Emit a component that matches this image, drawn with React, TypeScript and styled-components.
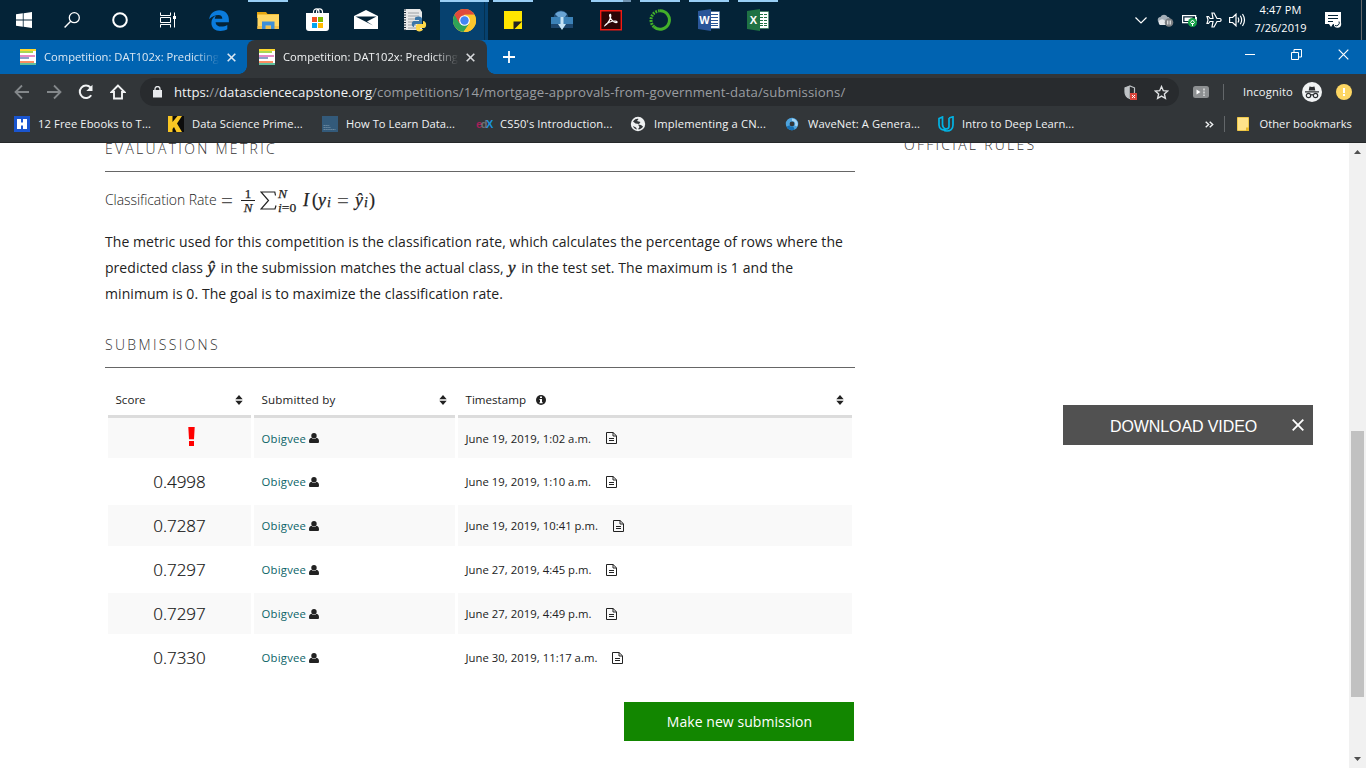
import React, { ReactNode } from "react";
import styled, { createGlobalStyle, css } from "styled-components";

const Global = createGlobalStyle`
  * { box-sizing: border-box; }
  html, body { margin: 0; padding: 0; background: #fff; }
  body { width: 1366px; height: 768px; overflow: hidden; font-family: "Open Sans", "Noto Sans", sans-serif; color: #222; }
  svg { display: block; flex: none; }
`;

const Screen = styled.div`
  position: relative;
  width: 1366px;
  height: 768px;
  display: flex;
  flex-direction: column;
  overflow: hidden;
`;

const Text = styled.span<{ $ls?: number; $color?: string }>`
  white-space: nowrap;
  letter-spacing: ${(p) => p.$ls ?? 0}px;
  ${(p) => p.$color && css`color: ${p.$color};`}
`;

/* ---------- Task bar ---------- */
const TaskBar = styled.div`
  display: flex;
  flex: none;
  height: 40px;
  background: #042337;
`;
const SystemButtons = styled.div`
  display: flex;
  width: 195px;
`;
const SystemButton = styled.div`
  width: 48px;
  display: flex;
  align-items: center;
  justify-content: center;
`;
const AppButton = styled.div<{ $active?: boolean; $open?: boolean; $stacked?: boolean }>`
  width: 49px;
  height: 40px;
  display: flex;
  align-items: center;
  justify-content: center;
  padding-right: 1px;
  background: ${(p) => (p.$active ? "linear-gradient(90deg, #06416f 0 44px, #04304f 44px 45px, #06416f 45px 48px, transparent 48px)" : "transparent")};
  ${(p) => p.$open && css`
    background-image: linear-gradient(90deg, transparent 4px, #99cef5 4px ${p.$stacked ? 36 : 44}px, ${p.$stacked ? "#6f93b0" : "transparent"} ${p.$stacked ? 36 : 44}px 44px, transparent 44px);
    background-size: 100% 2px;
    background-repeat: no-repeat;
  `}
  ${(p) => p.$active && css`box-shadow: inset 0 2px 0 #99cef5;`}
`;
const Tray = styled.div`
  margin-left: auto;
  display: flex;
  align-items: center;
`;
const TrayIcon = styled.div<{ $w: number }>`
  width: ${(p) => p.$w}px;
  display: flex;
  justify-content: center;
`;
const Clock = styled.div`
  width: 63px;
  padding-bottom: 2px;
  font-size: 11px;
  line-height: 18px;
  color: #fff;
  display: flex;
  flex-direction: column;
  align-items: center;
`;

/* ---------- Browser frame ---------- */
const TabStrip = styled.div`
  display: flex;
  flex: none;
  height: 34px;
  background: #0063b1;
`;
const Tab = styled.div<{ $active?: boolean }>`
  position: relative;
  width: ${(p) => (p.$active ? 240 : 247)}px;
  padding-left: ${(p) => (p.$active ? 12 : 20)}px;
  display: flex;
  align-items: center;
  font-size: 11.2px;
  color: ${(p) => (p.$active ? "#f1f3f4" : "#dbe8f3")};
  ${(p) => p.$active && css`
    background: #323639;
    border-radius: 8px 8px 0 0;
    &::before, &::after {
      content: "";
      position: absolute;
      bottom: 0;
      width: 8px;
      height: 8px;
    }
    &::before { left: -8px; background: radial-gradient(circle at 0 0, transparent 7.5px, #323639 8px); }
    &::after { right: -8px; background: radial-gradient(circle at 100% 0, transparent 7.5px, #323639 8px); }
  `}
`;
const TabTitle = styled.div`
  width: 176px;
  margin: 0 7px 0 8px;
  padding-bottom: 2px;
  overflow: hidden;
  mask-image: linear-gradient(90deg, #000 150px, transparent 176px);
`;
const NewTab = styled.div`
  padding: 10px 0 0 15px;
`;
const WindowButtons = styled.div`
  margin-left: auto;
  display: flex;
  gap: 36px;
  padding: 9px 17px 0 0;
`;
const Toolbar = styled.div`
  flex: none;
  height: 36px;
  background: #323639;
  display: flex;
  align-items: center;
  padding-left: 14px;
`;
const NavButtons = styled.div`
  display: flex;
  gap: 16px;
  width: 126px;
`;
const AddressBar = styled.div`
  width: 1039px;
  height: 28px;
  border-radius: 14px;
  background: #282b2e;
  display: flex;
  align-items: center;
  padding: 0 10px 0 13px;
  font-size: 13.2px;
  color: #9a9da1;
`;
const Address = styled.div`
  margin-left: 12px;
  flex: 1;
`;
const AddressIcons = styled.div`
  display: flex;
  gap: 16px;
`;
const Extensions = styled.div`
  display: flex;
  align-items: center;
  font-size: 11.2px;
  color: #f1f3f4;
  padding-left: 14px;
`;
const Incognito = styled.div`
  padding-bottom: 2px;
`;
const Separator = styled.div<{ $l: number; $r: number; $h?: number }>`
  width: 1px;
  height: ${(p) => p.$h ?? 16}px;
  background: #63676a;
  margin: 0 ${(p) => p.$r}px 0 ${(p) => p.$l}px;
`;
const Round = styled.div<{ $size: number; $bg: string; $ml: number }>`
  width: ${(p) => p.$size}px;
  height: ${(p) => p.$size}px;
  margin-left: ${(p) => p.$ml}px;
  border-radius: 50%;
  background: ${(p) => p.$bg};
  display: flex;
  align-items: center;
  justify-content: center;
`;
const BookmarkBar = styled.div`
  flex: none;
  height: 33px;
  padding: 0 14px 4px 14px;
  background: #323639;
  border-bottom: 1px solid #25282a;
  display: flex;
  align-items: center;
  font-size: 11.2px;
  color: #f1f3f4;
`;
const Bookmark = styled.div`
  width: 154px;
  display: flex;
  align-items: center;
  gap: 8px;
`;
const BookmarkTitle = styled.div`
  padding-bottom: 2px;
`;
const OtherBookmarks = styled.div`
  margin-left: auto;
  display: flex;
  align-items: center;
`;
const OtherTitle = styled(BookmarkTitle)`
  margin-left: 10px;
`;

/* ---------- Page ---------- */
const Page = styled.div`
  flex: 1;
  min-height: 0;
  display: flex;
  overflow: hidden;
`;
const Main = styled.main`
  width: 750px;
  margin-left: 105px;
  margin-top: -7px;
`;
const Side = styled.aside`
  margin-left: 49px;
  margin-top: -11px;
  flex: 1;
`;
const Heading = styled.h2`
  margin: 0;
  height: 36px;
  line-height: 26px;
  font-size: 14px;
  font-weight: 300;
  color: #333;
  white-space: nowrap;
`;
const RuledHeading = styled(Heading)`
  border-bottom: 1px solid #666;
`;
const Formula = styled.div`
  display: flex;
  align-items: center;
  height: 34px;
  margin-top: 11px;
  font-size: 14px;
  font-weight: 300;
`;
const FormulaLabel = styled.div`
  padding-bottom: 2px;
  width: 112px;
`;
const MathRow = styled.div`
  display: flex;
  align-items: center;
  font-family: "Liberation Serif", serif;
  font-weight: 400;
  font-size: 18px;
  line-height: 20px;
  color: #222;
  -webkit-text-stroke: 0.25px #222;
`;
const Equals = styled.span<{ $l: number; $r: number }>`
  margin: 2px ${(p) => p.$r}px 0 ${(p) => p.$l}px;
  width: 12px;
  font-size: 21px;
  color: #555;
  -webkit-text-stroke: 0;
`;
const Fraction = styled.span`
  display: flex;
  flex-direction: column;
  align-items: center;
  width: 14px;
  margin: 0 5px 0 1px;
  padding-top: 2px;
  font-size: 13px;
  line-height: 12px;
  & > :first-child { border-bottom: 1px solid #222; width: 14px; text-align: center; }
  & > :last-child { padding-top: 1px; }
`;
const Limits = styled.span`
  display: flex;
  flex-direction: column;
  font-size: 13.5px;
  line-height: 11px;
  width: 25px;
  gap: 3px;
`;
const Var = styled.i``;
const MathPart = styled.span<{ $w: number; $sub?: boolean }>`
  width: ${(p) => p.$w}px;
  white-space: nowrap;
  ${(p) => p.$sub && css`font-size: 14px; padding-top: 6px;`}
`;
const InlineVar = styled.i`
  display: inline-block;
  width: 9px;
  margin: 0 0.5px 0 0.8px;
  font-family: "Liberation Serif", serif;
  font-size: 17px;
  line-height: 20px;
  -webkit-text-stroke: 0.4px #222;
`;
const Paragraph = styled.p`
  margin: 12px 0 25px;
  font-size: 14px;
  line-height: 26px;
`;
const Line = styled.div`
  height: 26px;
  white-space: nowrap;
`;

const Table = styled.div`
  display: grid;
  grid-template-columns: 143px 201px 394px;
  column-gap: 3px;
  row-gap: 3px;
  margin: 16px 3px 0;
`;
const HeadCell = styled.div`
  height: 34px;
  border-bottom: 3px solid #dcdcdc;
  margin-bottom: -3px;
  padding: 0 8px 0 7.5px;
  display: flex;
  align-items: center;
  font-size: 11.6px;
  font-weight: 500;
`;
const HeadEnd = styled.span`
  margin-left: auto;
`;
const InfoMark = styled.span`
  margin-left: 10px;
`;
const Cell = styled.div<{ $odd?: boolean; $first?: boolean; $center?: boolean }>`
  height: ${(p) => (p.$first ? 40 : 41)}px;
  background: ${(p) => (p.$odd ? "#f9f9f9" : "#fff")};
  padding: 0 7.5px;
  display: flex;
  align-items: center;
  justify-content: ${(p) => (p.$center ? "center" : "flex-start")};
  font-size: 11.3px;
`;
const Score = styled.span`
  font-size: 17px;
  font-weight: 300;
  color: #111;
  -webkit-text-stroke: 0.2px #111;
`;
const Failed = styled.span`
  margin: -4px 0 0 23px;
`;
const UserLink = styled.a`
  color: #0b6468;
  margin-right: 3px;
`;
const Stamp = styled.span`
  margin-right: 14.6px;
`;
const SubmitButton = styled.div`
  width: 230px;
  height: 39px;
  margin: 24px 0 0 519px;
  padding-left: 1px;
  background: #128600;
  color: #fff;
  font-size: 14px;
  display: flex;
  align-items: center;
  justify-content: center;
`;
const ScrollBar = styled.div`
  width: 17px;
  background: #f1f1f1;
  display: flex;
  flex-direction: column;
  align-items: center;
  padding: 7px 0 7px;
`;
const Track = styled.div`
  flex: 1;
  width: 13px;
  padding-top: 277px;
`;
const Thumb = styled.div`
  height: 266px;
  background: #c1c1c1;
`;
const DownloadPanel = styled.div`
  position: absolute;
  left: 1063px;
  top: 405px;
  width: 250px;
  height: 40px;
  background: #515151;
  color: #fff;
  font: 16px/40px "Liberation Sans", Arial, sans-serif;
  padding: 3px 9px 0 47px;
  display: flex;
  align-items: center;
  justify-content: space-between;
`;
const PanelClose = styled.span`
  margin-top: -4px;
`;

/* ---------- Icons ---------- */
const Svg = ({ w, h = w, vb, children }: { w: number; h?: number; vb?: string; children: ReactNode }) => (
  <svg width={w} height={h} viewBox={vb ?? `0 0 ${w} ${h}`} fill="none">{children}</svg>
);
const Windows = () => <Svg w={16}><path fill="#fff" d="M0 2.3 6.8 1.3V7.6H0zM7.6 1.2 16 0v7.6H7.6zM0 8.4h6.8v6.3L0 13.7zM7.6 8.4H16V16l-8.4-1.2z" /></Svg>;
const Search = () => <Svg w={16}><circle cx="10.3" cy="5.7" r="5" stroke="#fff" strokeWidth="1.3" /><path d="M6.7 9.3.6 15.5" stroke="#fff" strokeWidth="1.4" /></Svg>;
const Cortana = () => <Svg w={16}><circle cx="8" cy="8" r="6.8" stroke="#fff" strokeWidth="2" /></Svg>;
const TaskView = () => <Svg w={17} h={16}><path stroke="#fff" d="M.5 .5v3h10v-3M.5 15.500v-3h10v3M.5 5.500h10v5H.5zM14.500.5v15" /><path fill="#fff" d="M13 4h3v3h-3z" /></Svg>;
const Edge = () => <Svg w={20} h={21}><path fill="#0a7bdc" d="M.2 9.3C.8 4 4.8.3 10.3.3c6 0 9.6 4.2 9.6 9.7v2.2H6.6c.2 3 2.8 4.4 5.7 4.4 2.300 0 4.300-.6 6-1.600v4.300c-2 1.100-4.300 1.600-6.900 1.600-5.300 0-9-3-9-8 0-3.200 1.700-5.800 4.700-7.300-.8.900-1.200 2-1.300 3.200h7.500c0-2.500-1.300-3.900-3.800-3.900-3.700 0-7 1.700-9.300 4.400z" /></Svg>;
const Explorer = () => <Svg w={22} h={19}><path fill="#e5a50f" d="M0 1h9l1.500 2H22v4H0z" /><path fill="#ffd763" d="M.5 3.500H22V18H.5z" /><path fill="#f4c04a" d="M.5 15H22v3H.5z" /><path fill="#3e8fd8" d="M5 10.500h12.500V18H14v-3.500H8.500V18H5z" /></Svg>;
const Store = () => <Svg w={23} h={24}><path stroke="#fff" strokeWidth="1.200" d="M7.500 6V4c0-2 1.500-3.200 3-3.200S13 2 13 4v2M10.500 6V4c0-2 1.500-3.200 3-3.200S16.500 2 16.500 4v2" /><path fill="#fff" d="M0 5h23v15c0 2-1 3-3 3H3c-2 0-3-1-3-3z" /><path fill="#f25022" d="M6 9h5v5H6z" /><path fill="#7fba00" d="M12 9h5v5h-5z" /><path fill="#00a4ef" d="M6 15h5v5H6z" /><path fill="#ffb900" d="M12 15h5v5h-5z" /></Svg>;
const Mail = () => <Svg w={24} h={20}><path fill="#fff" d="M0 6 12 0l12 6v13H0z" /><path fill="#042337" d="M1.500 6.500h21L13 11.500l6 4L1.500 6.500z" /></Svg>;
const PyFile = () => <Svg w={24} h={24}><path fill="#e8e8e8" d="M1 1h16l2 3v18H1z" /><path stroke="#8a8f94" d="M5 5h11M5 8h11M5 11h11M5 14h8M5 17h8M5 20h8" strokeWidth=".8" /><path stroke="#1b2b38" d="M2 1.500v21" strokeDasharray="1 1.500" strokeWidth="2" /><path fill="#3b76a8" d="M12 9.500c4-2 7-1 7 1.500v5h-6c-1.500 0-2 1-2 3-3 0-3-6 0-6h5v-1h-4z" /><path fill="#ffd849" d="M20 13c4 0 4 6.500 1 7h-4v1h3c0 3-7 3.500-7 0v-3c0-1 1-2 2-2h5z" /></Svg>;
const Chrome = () => <Svg w={23} vb="0 0 24 24"><circle cx="12" cy="12" r="12" fill="#fbc72d" /><path fill="#2ea458" d="m12 12-10.400-6A12 12 0 0 0 11 24l5.600-8z" /><path fill="#e04a3c" d="M12 6h10.400A12 12 0 0 0 1.600 6l5.200 9z" /><path fill="#fbc72d" d="M12 6h10.400A12 12 0 0 1 11 24l6-9z" /><circle cx="12" cy="12" r="5.600" fill="#fff" /><circle cx="12" cy="12" r="4.400" fill="#4285f4" /></Svg>;
const Sticky = () => <Svg w={18}><path fill="#ffe500" d="M0 0h18v18H0z" /><path fill="#222" d="M9.500 18v-7.500H18l-7.500 7.500z" /></Svg>;
const CloudApp = () => <Svg w={22} h={20}><circle cx="10" cy="8" r="7.500" fill="#214e78" /><path fill="#69a4d4" d="M4 4a8 8 0 0 1 12 0l-2 3H7z" /><path fill="#3c82b8" d="M0 7h22v11H0z" /><path fill="#1d466d" d="M0 14h22v4H0z" /><path fill="#c5e3f5" d="M9.500 7h3v7H15l-4 6-4-6h2.500z" /></Svg>;
const Acrobat = () => <Svg w={22} h={21}><path fill="#2a0506" stroke="#f01b14" strokeWidth="1.400" d="M.7.700h20.600v19H.7z" /><path stroke="#fff" strokeWidth="1.200" d="M5 15.500c3-1.500 6.500-8 5.800-10.500-.3-1.300-1.500-.6-1.200.8.500 3 4 7 6.500 6.800 1.800-.2 1-1.600-1-1.600C12 11 6 13 5 15.500z" /></Svg>;
const Anaconda = () => <Svg w={22}><path stroke="#43b02a" strokeWidth="3" d="M11 1.800a9.200 9.200 0 1 1-6 16" /><path stroke="#43b02a" strokeWidth="3" strokeDasharray="1.800 1" d="M5 17.800A9.200 9.200 0 0 1 11 1.800" /></Svg>;
const OfficeLetter = styled.div`
  position: relative;
  width: 22px;
  height: 22px;
  & > b {
    position: absolute;
    left: 0;
    top: 2px;
    width: 13px;
    height: 18px;
    color: #fff;
    font: bold 11px/18px "Liberation Sans", sans-serif;
    text-align: center;
  }
`;
const Office = ({ letter, bg, grid }: { letter: string; bg: string; grid?: boolean }) => (
  <OfficeLetter>
    <Svg w={22}><path fill="#fff" stroke={bg} strokeWidth=".6" d="M11 2.500h10.700v17H11z" /><path stroke={bg} d="M13 5.500h7M13 8.500h7M13 11.500h7M13 14.500h7M13 16.500h7" />{grid && <path stroke="#fff" d="M16.500 4v14" />}<path fill={bg} d="M0 2 13 0v22L0 20z" /></Svg>
    <b>{letter}</b>
  </OfficeLetter>
);
const Favicon = () => <Svg w={16}><path fill="#fff" d="M0 0h16v16H0z" /><path fill="#fed82f" d="M0 0h16v2H0z" /><path fill="#a6d854" d="M0 2h13v2H0z" /><path fill="#e78ac3" d="M0 6h15v2H0z" /><path fill="#8da0cb" d="M0 8h9v2H0z" /><path fill="#fc8d62" d="M0 12h14v2H0z" /><path fill="#5fbf9f" d="M0 14h16v2H0z" /></Svg>;
const Cross = ({ s, c = "#fff", sw = 1.6 }: { s: number; c?: string; sw?: number }) => <Svg w={s}><path d={`M.7 .7 ${s - 0.7} ${s - 0.7}M${s - 0.7} .7 .7 ${s - 0.7}`} stroke={c} strokeWidth={sw} /></Svg>;
const Arrow = ({ flip }: { flip?: boolean }) => <Svg w={16}><path transform={flip ? "matrix(-1 0 0 1 16 0)" : undefined} d="M15 8H2M8 1.500 1.500 8 8 14.500" stroke="#84888b" strokeWidth="1.800" /></Svg>;
const Reload = () => <Svg w={16}><path d="M13.200 11.200A6.200 6.200 0 1 1 12.500 3.500" stroke="#f1f3f4" strokeWidth="2" /><path fill="#f1f3f4" d="M14.500.8v6.200H8.300z" /></Svg>;
const Home = () => <Svg w={16}><path d="M8 1.500 1.500 8H4v6.500h8V8h2.500z" stroke="#f1f3f4" strokeWidth="1.900" /></Svg>;
const Lock = () => <Svg w={9} h={12}><path fill="#e8eaed" d="M0 4h9v7.500H0z" /><path d="M2 4.500V3a2.500 2.500 0 0 1 5 0v1.500" stroke="#e8eaed" strokeWidth="1.300" /></Svg>;
const Shield = () => <Svg w={14} h={15}><path stroke="#bfc3c6" strokeWidth="1.200" d="M5.800 1 1 2.800V7c0 3.500 2 5.500 4.800 6.500C8.600 12.500 10.500 10 10.500 7V2.800z" /><path fill="#bfc3c6" d="M5.800 1 1 2.800V7c0 3.500 2 5.500 4.800 6.500z" /><path fill="#d9453c" d="M6 8h7v7H6z" /><path stroke="#fff" d="m8 10 3 3m0-3-3 3" /></Svg>;
const Star = () => <Svg w={15} vb="0 0 24 24"><path d="m12 2.500 2.900 6.600 7 .6-5.300 4.700 1.600 7L12 17.700l-6.200 3.700 1.600-7-5.300-4.700 7-.6z" stroke="#e0e2e4" strokeWidth="2.200" /></Svg>;
const VideoExt = () => <Svg w={16} h={12}><rect width="16" height="12" rx="2.500" fill="#8d9092" /><path fill="#fff" d="m3.500 3.500 4 2.500-4 2.500z" /><path fill="#c9cbcc" d="M10 2.500h2v2h-2zM10 5.500h2v2h-2zM10 8.500h2v1.500h-2z" /></Svg>;
const Spy = () => <Svg w={14} h={14}><path fill="#2b2e31" d="M4.500 1.500 7 2l2.500-.5.8 4H3.700zM0 6.300h14v1.200H0z" /><g stroke="#2b2e31" strokeWidth="1.200"><circle cx="3.500" cy="10.500" r="2.200" /><circle cx="10.500" cy="10.500" r="2.200" /><path d="M5.700 10q1.300-.7 2.600 0" /></g></Svg>;
const Bang = () => <Svg w={2} h={8}><path fill="#fff" d="M0 0h2v5H0zM0 6h2v2H0z" /></Svg>;
const HMark = () => <Svg w={16}><path fill="#1a55cf" d="M0 0h16v16H0z" /><path fill="#fff" d="M3 3h4v3.500h2V3h4v10H9V9.500H7V13H3z" /></Svg>;
const KMark = () => <Svg w={16}><path fill="#0c0c0c" d="M0 0h16v16H0z" /><path fill="#f9c623" d="M0 0h4.500v6L9.500 0H14L9 7.500l5 8.500H8.500L6 11l-1.500 2v3H0z" /></Svg>;
const DataMark = () => <Svg w={16}><path fill="#335a7a" d="M0 0h16v16H0z" /><path stroke="#8fa6b7" strokeWidth=".6" d="M1.500 9.500h6M1.500 11.500h7M1.500 13.500h12" strokeDasharray="1.500 .4" /></Svg>;
const EdxMark = styled.span`
  width: 16px;
  flex: none;
  padding-bottom: 1px;
  font: bold 11px/12px "Liberation Sans", sans-serif;
  letter-spacing: -1.4px;
  & > :nth-child(1) { color: #a52058; }
  & > :nth-child(2) { color: #6c7073; }
  & > :nth-child(3) { color: #1b93dd; }
`;
const Globe = () => <Svg w={16} vb="-1 -1 16 16"><circle cx="7" cy="7" r="7.200" fill="#eef0f1" /><path fill="#323639" d="M2 4.500C4 2 6 1.500 7.500 2L6 4l3.500 1L8 7 4.500 6.500zM7 7.500l3 .5 2 1.500c-1 2-3 3-5 2.800L8.500 10zM2 9l3 1.500 1 2C4 12 2.500 11 2 9z" /></Svg>;
const Wave = () => <Svg w={16} vb="-1 -1 16 16"><circle cx="7" cy="7" r="4.300" stroke="#4ea3dc" strokeWidth="3.800" /><path d="M7 2.700A4.300 4.300 0 0 1 11 9" stroke="#a8d4f2" strokeWidth="2.500" /><path d="M3 9a4.500 4.500 0 0 0 6 2" stroke="#1670b4" strokeWidth="3.500" /></Svg>;
const Udacity = () => <Svg w={16}><path stroke="#02b3e4" strokeWidth="1.700" d="M1 2.500 4.500 1v7.500c0 2 1 3.500 3 4.500C5 15 1 13 1 9zM11 2l4-1.200V9c0 4-3 6-6 6-2 0-3-.7-3.500-1.500M11 2v8.500c0 1.500-1 2.500-3.500 2.500" /></Svg>;
const NoteIcon = () => <Svg w={12} h={14}><path fill="#ffe38a" stroke="#f0c94a" d="M.5.500h11v13H.5z" /><path fill="#e8b92a" d="M9 10.500h3V14H9z" /></Svg>;

const Sort = () => <Svg w={8} h={10}><path fill="#222" d="M4 0 .3 4.200h7.400zM4 10 .3 5.800h7.400z" /></Svg>;
const Info = () => <Svg w={10}><circle cx="5" cy="5" r="5" fill="#222" /><path fill="#fff" d="M4 1.500h2v1.500H4zM3.500 4H6v3.200h.7v1.100H3.400V7.200H4V5h-.5z" /></Svg>;
const User = () => <Svg w={10} h={10}><circle cx="5" cy="2.800" r="2.700" fill="#222" /><path fill="#222" d="M2.500 4.700C3.900 6.300 6.100 6.300 7.500 4.700 9.300 5 10 6.300 10 8.500 10 9.600 9.500 10 8.700 10H1.300C.5 10 0 9.600 0 8.500c0-2.200.7-3.500 2.500-3.800z" /></Svg>;
const Doc = () => <Svg w={11} h={12}><path stroke="#222" d="M.5.500h6.500l3.500 3.300v7.700H.5zM7 .5v3.500h3.500M3 6.500h5M3 8.500h5" /></Svg>;
const Alert = () => <Svg w={7} h={19}><path fill="#f00" d="M.3 0h6.400L6 12.200H1zM1 14h5v5H1z" /></Svg>;
const Chevron = () => <Svg w={12} h={7}><path d="m.5.500 5.500 5.500L11.500.5" stroke="#fff" strokeWidth="1.200" /></Svg>;
const CloudPaused = () => <Svg w={17} h={13}><path fill="#a5afb8" d="M4 9a3 3 0 0 1-.5-6C5 0 9 0 10.500 3 13 3 13 5 13 7z" /><path fill="#e3e7ea" d="M3 11a3 3 0 0 1 0-5c3-2 6 0 6 5z" /><circle cx="12" cy="8.500" r="4.300" fill="#7b7f83" /><path stroke="#fff" d="M10.800 6.500v4M13.200 6.500v4" /></Svg>;
const Battery = () => <Svg w={16} h={13}><path stroke="#fff" strokeWidth="1.200" d="M.6 1.600h13v7H.6z" /><path fill="#fff" d="M2.500 3.500h8v3.500h-8zM14 3h1v4h-1z" /><circle cx="10.500" cy="8.500" r="4.500" fill="#16a34a" /><path stroke="#fff" d="m10.500 6 2 2.500-2 2-2-2zM10.500 9v3" /></Svg>;
const Plane = () => <Svg w={16}><path stroke="#fff" strokeWidth="1.200" d="M6 1h2l3 5.500h3c1.500.5 1.500 2.500 0 3h-3L8 15H6l1-5.500H4L2.500 11.500H1L2 8 1 4.500h1.500L4 6.500h3z" /></Svg>;
const Volume = () => <Svg w={17} h={14}><path stroke="#fff" strokeWidth="1.200" d="M.6 4.500h3L7 1.200v11.600L3.600 9.500h-3zM9 4.500q1.500 2.500 0 5M11.300 2.800q2.700 4.200 0 8.400M13.500 1q4 6 0 12" /></Svg>;
const Notifications = () => <Svg w={17}><path fill="#fff" d="M0 0h16v12H8l-2 3-2-3H0z" /><path stroke="#042337" d="M3 3.500h10M3 6.500h10M3 9.500h5" /><circle cx="12.500" cy="12" r="3.700" fill="#fff" /><path d="M14 9.500a3 3 0 0 1-4 4" stroke="#042337" /></Svg>;
const Chevrons = () => <Svg w={9} h={7}><path d="m.7 .7 3 2.800-3 2.800M4.700 .7l3 2.800-3 2.800" stroke="#f1f3f4" strokeWidth="1.400" /></Svg>;

/* ---------- Data ---------- */
const rows: { score: string | null; time: string }[] = [
  { score: null, time: "June 19, 2019, 1:02 a.m." },
  { score: "0.4998", time: "June 19, 2019, 1:10 a.m." },
  { score: "0.7287", time: "June 19, 2019, 10:41 p.m." },
  { score: "0.7297", time: "June 27, 2019, 4:45 p.m." },
  { score: "0.7297", time: "June 27, 2019, 4:49 p.m." },
  { score: "0.7330", time: "June 30, 2019, 11:17 a.m." },
];
const bookmarks: { icon: ReactNode; title: string; ls: number }[] = [
  { icon: <HMark />, title: "12 Free Ebooks to T...", ls: 0.102 },
  { icon: <KMark />, title: "Data Science Prime...", ls: 0.08 },
  { icon: <DataMark />, title: "How To Learn Data...", ls: 0.03 },
  { icon: <EdxMark><span>e</span><span>d</span><span>X</span></EdxMark>, title: "CS50's Introduction...", ls: 0.1 },
  { icon: <Globe />, title: "Implementing a CN...", ls: 0.15 },
  { icon: <Wave />, title: "WaveNet: A Genera...", ls: 0.095 },
  { icon: <Udacity />, title: "Intro to Deep Learn...", ls: 0.07 },
];

export default function App() {
  return (
    <>
      <Global />
      <Screen>
        <TaskBar>
          <SystemButtons>
            <SystemButton><Windows /></SystemButton>
            <SystemButton><Search /></SystemButton>
            <SystemButton><Cortana /></SystemButton>
            <SystemButton><TaskView /></SystemButton>
          </SystemButtons>
          <AppButton><Edge /></AppButton>
          <AppButton $open><Explorer /></AppButton>
          <AppButton><Store /></AppButton>
          <AppButton><Mail /></AppButton>
          <AppButton><PyFile /></AppButton>
          <AppButton $active><Chrome /></AppButton>
          <AppButton $open><Sticky /></AppButton>
          <AppButton><CloudApp /></AppButton>
          <AppButton $open $stacked><Acrobat /></AppButton>
          <AppButton $open><Anaconda /></AppButton>
          <AppButton $open><Office letter="W" bg="#2a5699" /></AppButton>
          <AppButton $open><Office letter="X" bg="#1f7244" grid /></AppButton>
          <Tray>
            <TrayIcon $w={24}><Chevron /></TrayIcon>
            <TrayIcon $w={24}><CloudPaused /></TrayIcon>
            <TrayIcon $w={25}><Battery /></TrayIcon>
            <TrayIcon $w={23}><Plane /></TrayIcon>
            <TrayIcon $w={24}><Volume /></TrayIcon>
            <Clock><Text $ls={0.12}>4:47 PM</Text><Text>7/26/2019</Text></Clock>
            <TrayIcon $w={42}><Notifications /></TrayIcon>
            <Separator $l={7} $r={4} $h={40} />
          </Tray>
        </TaskBar>
        <TabStrip>
          <Tab>
            <Favicon />
            <TabTitle><Text>Competition: DAT102x: Predicting</Text></TabTitle>
            <Cross s={9} c="#dbe8f3" />
          </Tab>
          <Tab $active>
            <Favicon />
            <TabTitle><Text>Competition: DAT102x: Predicting</Text></TabTitle>
            <Cross s={9} c="#d8dadc" />
          </Tab>
          <NewTab><Svg w={14}><path d="M7 1v12M1 7h12" stroke="#fff" strokeWidth="1.800" /></Svg></NewTab>
          <WindowButtons>
            <Svg w={10}><path d="M0 5.500h10" stroke="#fff" /></Svg>
            <Svg w={11}><path d="M.5 3.500h7v7h-7zM3 3.500V.5h7.500V8H7.500" stroke="#fff" /></Svg>
            <Cross s={11} sw={1.2} />
          </WindowButtons>
        </TabStrip>
        <Toolbar>
          <NavButtons><Arrow /><Arrow flip /><Reload /><Home /></NavButtons>
          <AddressBar>
            <Lock />
            <Address>
              <Text $color="#f1f3f4">https:</Text><Text>//</Text><Text $color="#f1f3f4" $ls={0.02}>datasciencecapstone.org</Text>
              <Text $ls={0.125}>/competitions/14/mortgage-approvals-from-government-data/submissions/</Text>
            </Address>
            <AddressIcons><Shield /><Star /></AddressIcons>
          </AddressBar>
          <Extensions>
            <VideoExt />
            <Separator $l={14} $r={19} />
            <Incognito><Text $ls={0.16}>Incognito</Text></Incognito>
            <Round $size={20} $bg="#f1f3f4" $ml={9}><Spy /></Round>
            <Round $size={16} $bg="#fdd663" $ml={14}><Bang /></Round>
          </Extensions>
        </Toolbar>
        <BookmarkBar>
          {bookmarks.map((b) => (
            <Bookmark key={b.title}>{b.icon}<BookmarkTitle><Text $ls={b.ls}>{b.title}</Text></BookmarkTitle></Bookmark>
          ))}
          <OtherBookmarks>
            <Chevrons />
            <Separator $l={10} $r={12} />
            <NoteIcon />
            <OtherTitle><Text $ls={0.05}>Other bookmarks</Text></OtherTitle>
          </OtherBookmarks>
        </BookmarkBar>
        <Page>
          <Main>
            <RuledHeading><Text $ls={2.3}>EVALUATION METRIC</Text></RuledHeading>
            <Formula>
              <FormulaLabel><Text $ls={-0.078}>Classification Rate</Text></FormulaLabel>
              <MathRow>
                <Equals $l={4} $r={7}>=</Equals>
                <Fraction><span>1</span><Var>N</Var></Fraction>
                <MathPart $w={18}><Svg w={17} h={19}><path d="M15.500 4.500 14.800 1H1l7.500 8.500L1 18h14l1-3.500" stroke="#222" strokeWidth="1.200" /></Svg></MathPart>
                <Limits><Var>N</Var><span><Var>i</Var>=0</span></Limits>
                <MathPart $w={9}><Var>I</Var></MathPart>
                <MathPart $w={6}>(</MathPart>
                <MathPart $w={9}><Var>y</Var></MathPart>
                <MathPart $w={5} $sub><Var>i</Var></MathPart>
                <Equals $l={5} $r={6}>=</Equals>
                <MathPart $w={9}><Var>ŷ</Var></MathPart>
                <MathPart $w={5} $sub><Var>i</Var></MathPart>
                <MathPart $w={6}>)</MathPart>
              </MathRow>
            </Formula>
            <Paragraph>
              <Line><Text $ls={0.071}>The metric used for this competition is the classification rate, which calculates the percentage of rows where the</Text></Line>
              <Line><Text $ls={0.042}>predicted class</Text> <InlineVar>ŷ</InlineVar> <Text $ls={0.048}>in the submission matches the actual class,</Text> <InlineVar>y</InlineVar> <Text $ls={0.077}>in the test set. The maximum is 1 and the</Text></Line>
              <Line><Text $ls={0.07}>minimum is 0. The goal is to maximize the classification rate.</Text></Line>
            </Paragraph>
            <RuledHeading><Text $ls={2.33}>SUBMISSIONS</Text></RuledHeading>
            <Table>
              <HeadCell><Text>Score</Text><HeadEnd><Sort /></HeadEnd></HeadCell>
              <HeadCell><Text $ls={0.165}>Submitted by</Text><HeadEnd><Sort /></HeadEnd></HeadCell>
              <HeadCell><Text>Timestamp</Text><InfoMark><Info /></InfoMark><HeadEnd><Sort /></HeadEnd></HeadCell>
              {rows.map((r, i) => (
                <React.Fragment key={r.time}>
                  <Cell $odd={i % 2 === 0} $first={i === 0} $center>
                    {r.score ? <Score>{r.score}</Score> : <Failed><Alert /></Failed>}
                  </Cell>
                  <Cell $odd={i % 2 === 0} $first={i === 0}><UserLink><Text $ls={0.24}>Obigvee</Text></UserLink><User /></Cell>
                  <Cell $odd={i % 2 === 0} $first={i === 0}><Stamp><Text $ls={0.035}>{r.time}</Text></Stamp><Doc /></Cell>
                </React.Fragment>
              ))}
            </Table>
            <SubmitButton><Text $ls={0.05}>Make new submission</Text></SubmitButton>
          </Main>
          <Side><Heading><Text $ls={2.27}>OFFICIAL RULES</Text></Heading></Side>
          <ScrollBar>
            <Svg w={7} h={4}><path fill="#505050" d="M3.500 0 7 4H0z" /></Svg>
            <Track><Thumb /></Track>
            <Svg w={7} h={4}><path fill="#505050" d="M0 0h7L3.500 4z" /></Svg>
          </ScrollBar>
        </Page>
        <DownloadPanel><Text $ls={-0.1}>DOWNLOAD VIDEO</Text><PanelClose><Cross s={12} sw={1.8} /></PanelClose></DownloadPanel>
      </Screen>
    </>
  );
}
